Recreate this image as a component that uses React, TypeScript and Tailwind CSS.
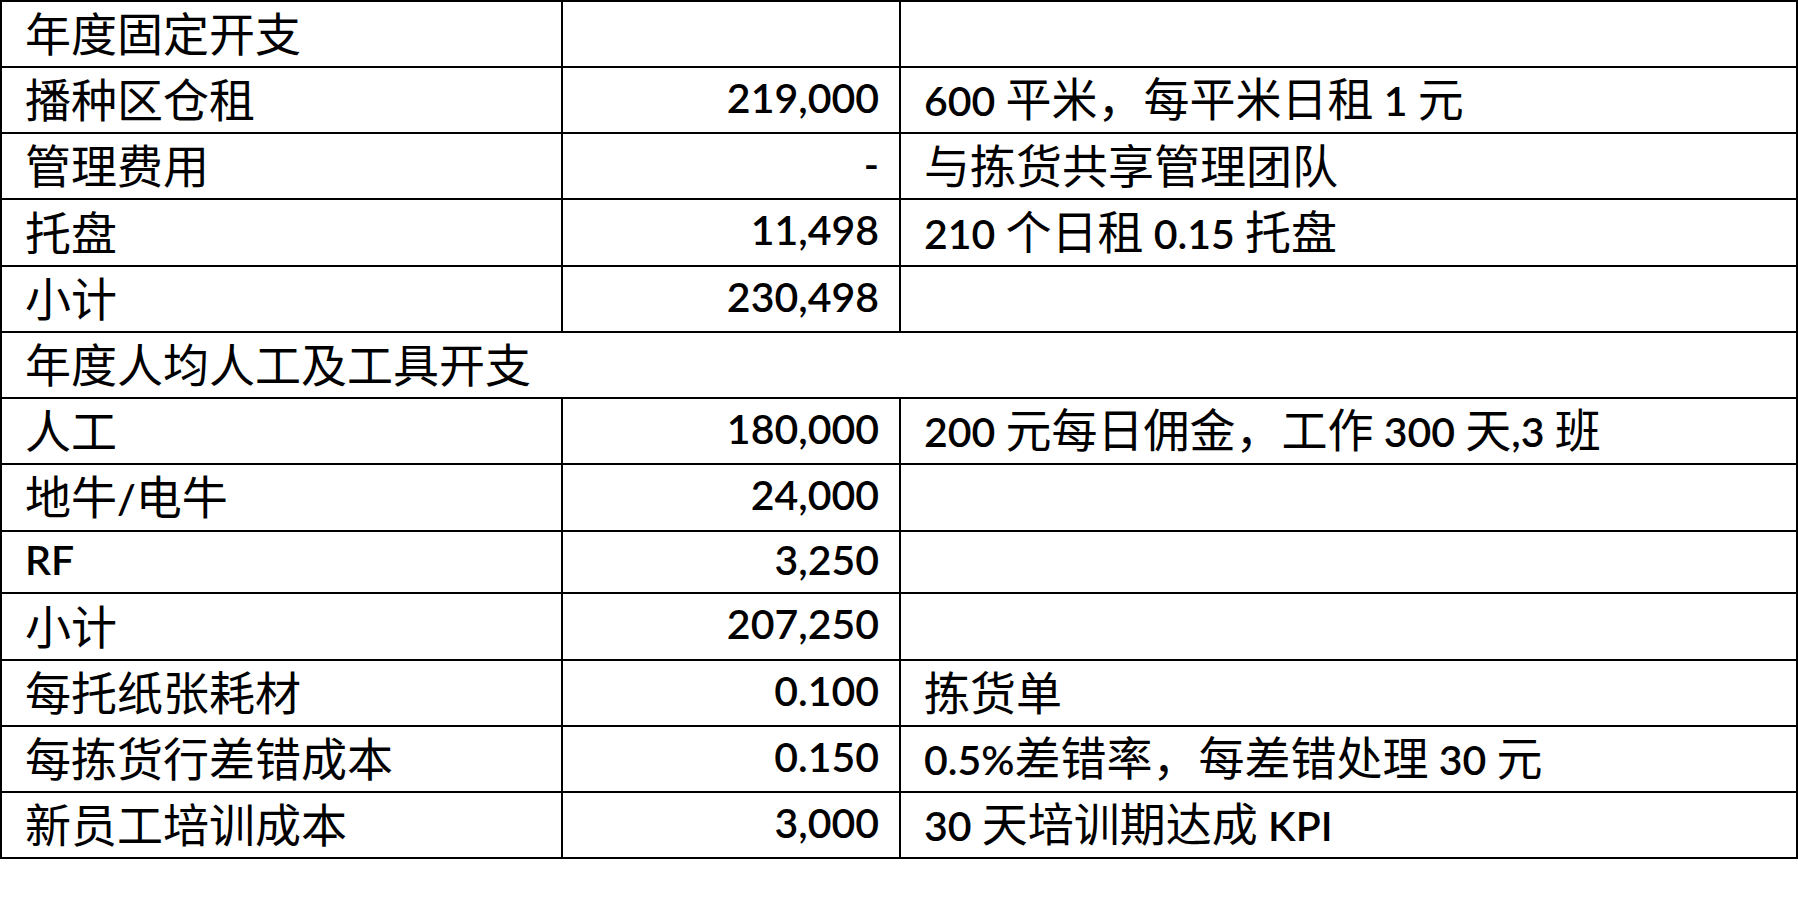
import React from "react";

type Row = {
  label: string;
  amount?: string;
  note?: string;
  h: string;
  span?: boolean;
};

const rows: Row[] = [
  { label: "年度固定开支", amount: "", note: "", h: "h-[66px]" },
  { label: "播种区仓租", amount: "219,000", note: "600 平米，每平米日租 1 元", h: "h-[66px]" },
  { label: "管理费用", amount: "-", note: "与拣货共享管理团队", h: "h-[66px]" },
  { label: "托盘", amount: "11,498", note: "210 个日租 0.15 托盘", h: "h-[67px]" },
  { label: "小计", amount: "230,498", note: "", h: "h-[66px]" },
  { label: "年度人均人工及工具开支", h: "h-[66px]", span: true },
  { label: "人工", amount: "180,000", note: "200 元每日佣金，工作 300 天,3 班", h: "h-[66px]" },
  { label: "地牛/电牛", amount: "24,000", note: "", h: "h-[67px]" },
  { label: "RF", amount: "3,250", note: "", h: "h-[62px]" },
  { label: "小计", amount: "207,250", note: "", h: "h-[67px]" },
  { label: "每托纸张耗材", amount: "0.100", note: "拣货单", h: "h-[66px]" },
  { label: "每拣货行差错成本", amount: "0.150", note: "0.5%差错率，每差错处理 30 元", h: "h-[66px]" },
  { label: "新员工培训成本", amount: "3,000", note: "30 天培训期达成 KPI", h: "h-[66px]" },
];

// Latin runs are set a little smaller so digits sit like Calibri next to the CJK glyphs
function Mixed({ text }: { text: string }) {
  const parts = text.split(/([\x00-\x7F]+)/).filter((p) => p.length > 0);
  return (
    <span className="whitespace-pre">
      {parts.map((p, i) =>
        /^[\x00-\x7F]+$/.test(p) ? (
          <span key={i} className="font-['Lato',sans-serif] text-[41px] font-semibold">
            {p}
          </span>
        ) : (
          <span key={i} className="font-['Noto_Sans_CJK_SC',sans-serif] text-[46px]">
            {p}
          </span>
        )
      )}
    </span>
  );
}

const cell = "flex items-center leading-none text-black";

export default function App() {
  return (
    <div className="min-h-screen bg-white">
      <div className="w-[1798px] border-t-2 border-l-2 border-black">
        {rows.map((r, i) =>
          r.span ? (
            <div key={i} className={`${r.h} flex border-b-2 border-r-2 border-black`}>
              <div className={`${cell} pl-[23px] pb-[6px]`}>
                <Mixed text={r.label} />
              </div>
            </div>
          ) : (
            <div
              key={i}
              className={`${r.h} grid grid-cols-[561px_338px_1fr] border-b-2 border-black`}
            >
              <div className={`${cell} border-r-2 border-black pl-[23px] pb-[6px]`}>
                <Mixed text={r.label} />
              </div>
              <div className={`${cell} justify-end border-r-2 border-black pr-[20px] pb-[6px]`}>
                <Mixed text={r.amount ?? ""} />
              </div>
              <div className={`${cell} border-r-2 border-black pl-[23px] pb-[6px]`}>
                <Mixed text={r.note ?? ""} />
              </div>
            </div>
          )
        )}
      </div>
    </div>
  );
}
